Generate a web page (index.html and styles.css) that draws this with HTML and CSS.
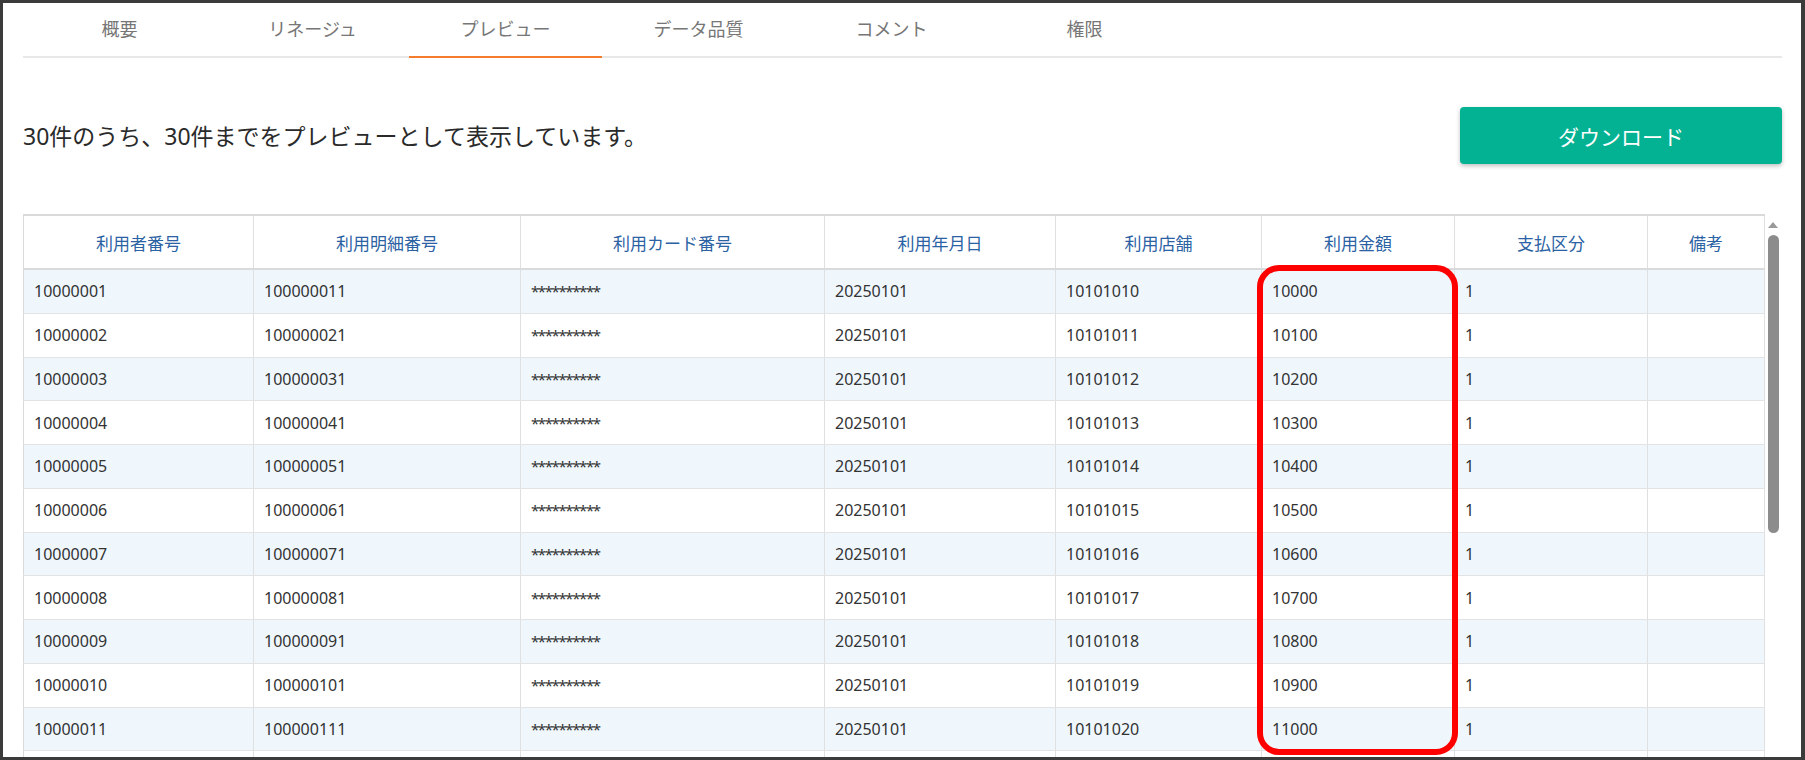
FILE: index.html
```html
<!DOCTYPE html>
<html lang="ja">
<head>
<meta charset="utf-8">
<title>プレビュー</title>
<link rel="stylesheet" href="styles.css">
</head>
<body>
<div class="frame">
  <nav class="tabs">
    <a class="tab">概要</a>
    <a class="tab">リネージュ</a>
    <a class="tab active">プレビュー</a>
    <a class="tab">データ品質</a>
    <a class="tab">コメント</a>
    <a class="tab">権限</a>
  </nav>

  <div class="toolbar">
    <p class="summary">30件のうち、30件までをプレビューとして表示しています。</p>
    <button class="download">ダウンロード</button>
  </div>

  <div class="grid-area">
    <div class="grid-scroll">
      <table class="grid">
        <colgroup>
          <col class="c1"><col class="c2"><col class="c3"><col class="c4">
          <col class="c5"><col class="c6"><col class="c7"><col class="c8">
        </colgroup>
        <thead>
          <tr>
            <th>利用者番号</th><th>利用明細番号</th><th>利用カード番号</th><th>利用年月日</th>
            <th>利用店舗</th><th>利用金額</th><th>支払区分</th><th>備考</th>
          </tr>
        </thead>
        <tbody>
          <tr><td>10000001</td><td>100000011</td><td class="masked">**********</td><td>20250101</td><td>10101010</td><td>10000</td><td>1</td><td></td></tr>
          <tr><td>10000002</td><td>100000021</td><td class="masked">**********</td><td>20250101</td><td>10101011</td><td>10100</td><td>1</td><td></td></tr>
          <tr><td>10000003</td><td>100000031</td><td class="masked">**********</td><td>20250101</td><td>10101012</td><td>10200</td><td>1</td><td></td></tr>
          <tr><td>10000004</td><td>100000041</td><td class="masked">**********</td><td>20250101</td><td>10101013</td><td>10300</td><td>1</td><td></td></tr>
          <tr><td>10000005</td><td>100000051</td><td class="masked">**********</td><td>20250101</td><td>10101014</td><td>10400</td><td>1</td><td></td></tr>
          <tr><td>10000006</td><td>100000061</td><td class="masked">**********</td><td>20250101</td><td>10101015</td><td>10500</td><td>1</td><td></td></tr>
          <tr><td>10000007</td><td>100000071</td><td class="masked">**********</td><td>20250101</td><td>10101016</td><td>10600</td><td>1</td><td></td></tr>
          <tr><td>10000008</td><td>100000081</td><td class="masked">**********</td><td>20250101</td><td>10101017</td><td>10700</td><td>1</td><td></td></tr>
          <tr><td>10000009</td><td>100000091</td><td class="masked">**********</td><td>20250101</td><td>10101018</td><td>10800</td><td>1</td><td></td></tr>
          <tr><td>10000010</td><td>100000101</td><td class="masked">**********</td><td>20250101</td><td>10101019</td><td>10900</td><td>1</td><td></td></tr>
          <tr><td>10000011</td><td>100000111</td><td class="masked">**********</td><td>20250101</td><td>10101020</td><td>11000</td><td>1</td><td></td></tr>
          <tr class="blank"><td></td><td></td><td></td><td></td><td></td><td></td><td></td><td></td></tr>
        </tbody>
      </table>
      <!-- highlight around the amount column -->
      <div class="highlight"></div>
    </div>
    <div class="scrollbar">
      <span class="scroll-up"></span>
      <span class="scroll-thumb"></span>
    </div>
  </div>
</div>
</body>
</html>
```

FILE: styles.css
```css
html, body {
  margin: 0;
  padding: 0;
  background: #ffffff;
}

body {
  font-family: "Noto Sans", "Noto Sans CJK JP", sans-serif;
  color: #333333;
}

.frame {
  box-sizing: border-box;
  height: 760px;
  border: 3px solid #3b3b3b;
  border-right-width: 4px;
  padding: 0 19px 0 20px;
  overflow: hidden;
  background: #ffffff;
}

/* tab bar */
.tabs {
  display: flex;
  border-bottom: 2px solid #e8e8e8;
}

.tab {
  width: 193px;
  height: 53px;
  line-height: 53px;
  text-align: center;
  font-size: 18px;
  color: #767676;
  cursor: pointer;
}

.tab.active {
  border-bottom: 2px solid #f47c2c;
  margin-bottom: -2px;
}

/* summary + download */
.toolbar {
  display: flex;
  justify-content: space-between;
  align-items: center;
  margin-top: 49px;
}

.summary {
  margin: 0;
  font-size: 23px;
  color: #2a2a2a;
  line-height: 30px;
}

.download {
  width: 322px;
  height: 57px;
  border: none;
  border-radius: 4px;
  background: #03b193;
  color: #ffffff;
  font-family: "Noto Sans", "Noto Sans CJK JP", sans-serif;
  font-size: 21px;
  box-shadow: 0 2px 4px rgba(0, 0, 0, 0.25);
  cursor: pointer;
}

/* table */
.grid-area {
  display: flex;
  margin-top: 50px;
}

.grid-scroll {
  position: relative;
  width: 1741px;
}

.grid {
  width: 1741px;
  table-layout: fixed;
  border-collapse: collapse;
  border-top: 2px solid #dadada;
  border-left: 1px solid #dadada;
}

.c1 { width: 230px; }
.c2 { width: 267px; }
.c3 { width: 304px; }
.c4 { width: 231px; }
.c5 { width: 206px; }
.c6 { width: 193px; }
.c7 { width: 193px; }
.c8 { width: 117px; }

.grid th {
  height: 52px;
  padding: 0;
  font-size: 17px;
  font-weight: normal;
  color: #2b62a3;
  text-align: center;
  border-right: 1px solid #e0e0e0;
  border-bottom: 2px solid #dadada;
  background: #ffffff;
}

.grid td {
  height: 42.75px;
  padding: 0 0 0 10px;
  font-size: 16px;
  color: #333333;
  border-right: 1px solid #e0e0e0;
  border-bottom: 1px solid #e3e3e3;
  white-space: nowrap;
}

.grid tbody tr:nth-child(odd) td {
  background: #eff7fd;
}

.grid td.masked {
  letter-spacing: -1.4px;
  font-size: 15px;
}

.highlight {
  position: absolute;
  left: 1234px;
  top: 51px;
  width: 201px;
  height: 490px;
  box-sizing: border-box;
  border: 6px solid #ff0000;
  border-radius: 22px;
  pointer-events: none;
}

/* scrollbar */
.scrollbar {
  width: 18px;
  display: flex;
  flex-direction: column;
  align-items: center;
  padding-top: 8px;
}

.scroll-up {
  width: 0;
  height: 0;
  border-left: 5px solid transparent;
  border-right: 5px solid transparent;
  border-bottom: 6px solid #9a9a9a;
}

.scroll-thumb {
  margin-top: 7px;
  width: 11px;
  height: 298px;
  border-radius: 6px;
  background: #8c8c8c;
}
```
